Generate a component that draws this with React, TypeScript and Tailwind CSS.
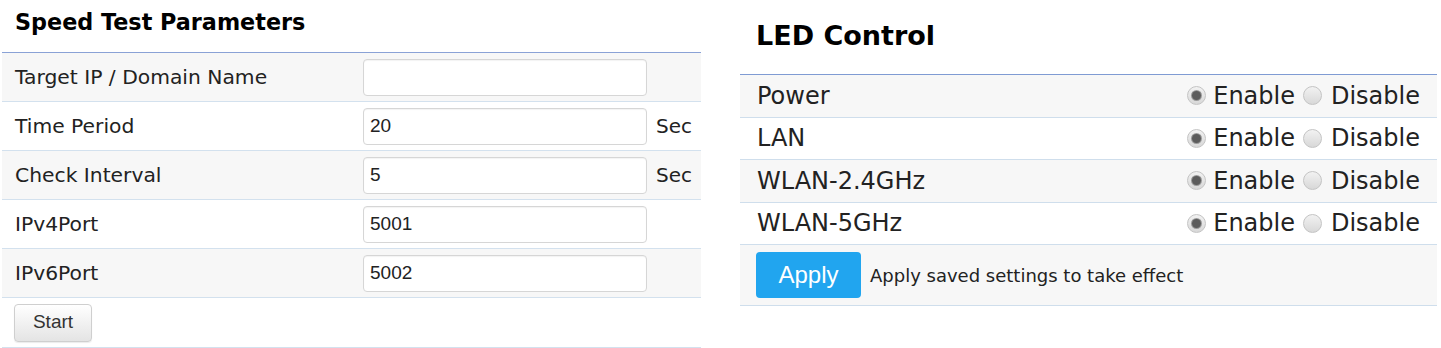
const verdana = "font-['DejaVu_Sans',Verdana,sans-serif]";
const arial = "font-['Liberation_Sans',Arial,sans-serif]";

interface SpeedRow {
  label: string;
  value: string;
  unit?: string;
}

const speedRows: SpeedRow[] = [
  { label: "Target IP / Domain Name", value: "" },
  { label: "Time Period", value: "20", unit: "Sec" },
  { label: "Check Interval", value: "5", unit: "Sec" },
  { label: "IPv4Port", value: "5001" },
  { label: "IPv6Port", value: "5002" },
];

const ledRows = ["Power", "LAN", "WLAN-2.4GHz", "WLAN-5GHz"];

const Radio = ({ checked }: { checked?: boolean }) => (
  <span className="flex h-[19px] w-[19px] items-center justify-center rounded-full border border-[#c4c4c4] bg-gradient-to-b from-[#f2f2f2] to-[#d8d8d8]">
    {checked && (
      <span className="h-[9px] w-[9px] rounded-full bg-[#5c5c5c] ring-1 ring-[#9a9a9a]" />
    )}
  </span>
);

const SpeedTest = () => {
  return (
    <div className="ml-[2px] w-[699px]">
      <div className="h-[52px] pl-[13px] pt-[9px]">
        <h2 className={`${verdana} text-[22.3px] font-bold leading-[26px] text-black`}>
          Speed Test Parameters
        </h2>
      </div>
      <div className="border-t border-[#8aa2d6]">
        {speedRows.map((row, i) => (
          <div
            key={row.label}
            className={`flex h-[49px] items-center border-b border-[#d3e1ee] ${
              i % 2 === 0 ? "bg-[#f7f7f7]" : "bg-white"
            }`}
          >
            <div className={`${verdana} w-[361px] pl-[13px] text-[20.3px] text-[#222]`}>
              {row.label}
            </div>
            <input
              readOnly
              value={row.value}
              className={`${arial} h-[37px] w-[284px] rounded-[4px] border border-[#d6d6d6] bg-white px-[6px] text-[19px] text-[#222] shadow-[inset_0_1px_1px_rgba(0,0,0,0.05)] outline-none`}
            />
            {row.unit && (
              <span className={`${verdana} ml-[9px] text-[20px] text-[#222]`}>
                {row.unit}
              </span>
            )}
          </div>
        ))}
        <div className="flex h-[50px] items-center border-b border-[#d3e1ee] bg-white pl-[12px]">
          <button
            className={`${arial} h-[38px] w-[78px] rounded-[4px] border border-[#cfcfcf] bg-gradient-to-b from-white to-[#e4e4e4] text-[19px] text-[#333] shadow-[0_1px_1px_rgba(0,0,0,0.08)]`}
          >
            Start
          </button>
        </div>
      </div>
    </div>
  );
};

const LedControl = () => {
  return (
    <div className="ml-[39px] w-[697px]">
      <div className="h-[74px] pl-[16px] pt-[20px]">
        <h2 className={`${verdana} text-[27px] font-bold leading-[32px] text-black`}>
          LED Control
        </h2>
      </div>
      <div className="border-t border-[#7f9bd3]">
        {ledRows.map((name, i) => (
          <div
            key={name}
            className={`flex h-[42.5px] items-center justify-between border-b border-[#cfdeec] pl-[17px] pr-[17px] ${
              i % 2 === 0 ? "bg-[#f7f7f7]" : "bg-white"
            } ${verdana} text-[24px] text-[#222]`}
          >
            <span>{name}</span>
            <div className="flex items-center">
              <Radio checked />
              <span className="ml-[7px]">Enable</span>
              <span className="ml-[8px]">
                <Radio />
              </span>
              <span className="ml-[9px]">Disable</span>
            </div>
          </div>
        ))}
        <div className="flex h-[61px] items-center border-b border-[#cfdeec] bg-[#f7f7f7] pl-[16px]">
          <button
            className={`${arial} h-[46px] w-[105px] rounded-[4px] bg-[#21a5ef] text-[24px] text-white`}
          >
            Apply
          </button>
          <span className={`${verdana} ml-[9px] text-[18px] text-[#222]`}>
            Apply saved settings to take effect
          </span>
        </div>
      </div>
    </div>
  );
};

export default function App() {
  return (
    <div className="flex h-[348px] w-[1441px] items-start bg-white">
      <SpeedTest />
      <LedControl />
    </div>
  );
}
